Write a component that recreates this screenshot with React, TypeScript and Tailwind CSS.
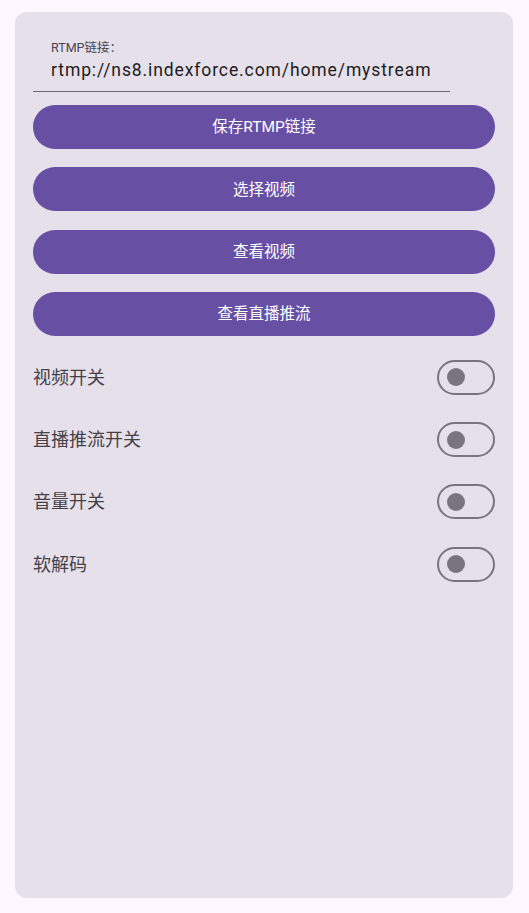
import React from "react";

const font = { fontFamily: 'Roboto, "Noto Sans CJK SC", sans-serif' };

function Toggle() {
  return (
    <div className="w-[58px] h-[35px] rounded-full border-2 border-[#79747e] flex items-center pl-[8px]">
      <div className="w-[18px] h-[18px] rounded-full bg-[#79747e]" />
    </div>
  );
}

export default function App() {
  const buttons = ["保存RTMP链接", "选择视频", "查看视频", "查看直播推流"];
  const rows = ["视频开关", "直播推流开关", "音量开关", "软解码"];
  return (
    <div className="w-[529px] h-[913px] bg-[#fef7ff] pt-[12px] pl-[15px]" style={font}>
      <div className="w-[498px] h-[886px] bg-[#e6e0eb] rounded-[12px] px-[18px] pt-[26px] flex flex-col">
        <div className="w-[417px] border-b border-[#6d6875] pl-[18px] pb-[8px]">
          <div className="text-[12.5px] leading-[18px] text-[#49454f] pt-[1px]">RTMP链接：</div>
          <div className="text-[17.5px] leading-[26px] text-[#1d1b20] tracking-[0.9px]">
            rtmp://ns8.indexforce.com/home/mystream
          </div>
        </div>
        <div className="flex flex-col gap-[18.33px] mt-[13px]">
          {buttons.map((b) => (
            <div
              key={b}
              className="h-[44px] rounded-full bg-[#6750a4] text-white text-[15.5px] flex items-center justify-center pt-[2px]"
            >
              {b}
            </div>
          ))}
        </div>
        <div className="flex flex-col mt-[10px]">
          {rows.map((r) => (
            <div key={r} className="h-[62.4px] flex items-center justify-between">
              <span className="text-[18px] text-[#444148]">{r}</span>
              <Toggle />
            </div>
          ))}
        </div>
      </div>
    </div>
  );
}
